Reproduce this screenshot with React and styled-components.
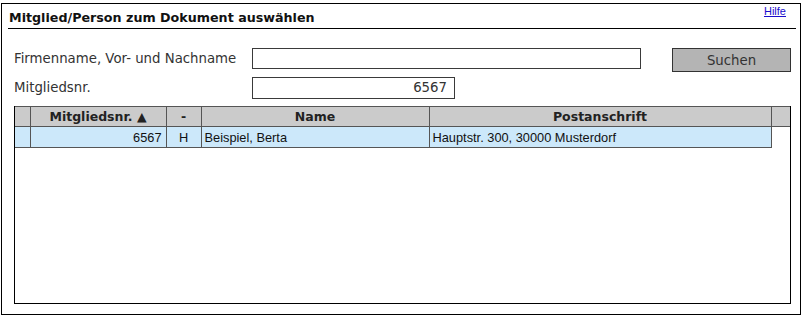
import React from "react";
import styled, { createGlobalStyle } from "styled-components";

const Global = createGlobalStyle`
  html, body { margin: 0; padding: 0; background: #fff; }
  body { font-family: "DejaVu Sans", Verdana, sans-serif; font-size: 12px; color: #222; }
`;

const Frame = styled.div`
  box-sizing: border-box;
  margin: 3px 0 0 1px;
  width: 800px;
  height: 312px;
  border: 1px solid #000;
  padding: 0 4px 0 6px;
  display: flex;
  flex-direction: column;
`;

const TitleBar = styled.div`
  display: flex;
  justify-content: space-between;
  align-items: flex-end;
  height: 24px;
  border-bottom: 1px solid #000;
  padding: 0 10px 0 1px;
`;

const Title = styled.h1`
  margin: 0 0 3px 0;
  font-size: 12.7px;
  font-weight: bold;
  color: #111;
`;

const HelpLink = styled.a`
  align-self: flex-start;
  margin-top: 1px;
  font-family: "Liberation Sans", Arial, sans-serif;
  font-size: 11px;
  color: #1a0dcc;
  text-decoration: underline;
`;

const Form = styled.div`
  display: grid;
  grid-template-columns: 238px 388px 32px 119px;
  grid-template-rows: 21px 21px;
  row-gap: 8px;
  align-items: center;
  margin: 19px 0 0 6px;
`;

const Label = styled.label`
  font-size: 13.3px;
  color: #333;
  line-height: 15px;
`;

const Input = styled.input`
  box-sizing: border-box;
  height: ${(p) => p.$height || 21}px;
  width: ${(p) => p.$width}px;
  border: 1px solid #3a3a3a;
  padding: 0 7px;
  font-family: "DejaVu Sans", Verdana, sans-serif;
  font-size: 13.3px;
  color: #333;
  text-align: ${(p) => (p.$right ? "right" : "left")};
  outline: none;
`;

const Button = styled.button`
  grid-column: 4;
  box-sizing: border-box;
  width: 119px;
  height: 24px;
  align-self: start;
  border: 1px solid #333;
  background: #b4b4b4;
  font-family: "DejaVu Sans", Verdana, sans-serif;
  font-size: 13.3px;
  color: #333;
  padding: 0;
`;

const Spacer = styled.div``;

const TableBox = styled.div`
  box-sizing: border-box;
  margin: 8px 0 0 6px;
  width: 777px;
  height: 198px;
  border-left: 1px solid #000;
  border-right: 1px solid #000;
  border-bottom: 1px solid #000;
  overflow: hidden;
`;

const Table = styled.table`
  border-collapse: collapse;
  table-layout: fixed;
  width: 775px;
`;

const Th = styled.th`
  height: 19px;
  padding: 0;
  background: #cbcbcb;
  border: 1px solid #555;
  font-size: 12.5px;
  font-weight: bold;
  color: #222;
  text-align: center;
  &:first-child { border-left: none; }
  &:last-child { border-right: none; }
`;

const Td = styled.td`
  height: 20px;
  padding: 0 ${(p) => (p.$align === "right" ? "4px" : "3px")};
  background: #cce8fa;
  border: 1px solid #555;
  border-top: none;
  font-family: "Liberation Sans", Arial, sans-serif;
  font-size: 12.8px;
  color: #111;
  text-align: ${(p) => p.$align || "left"};
  white-space: nowrap;
  &:first-child { border-left: none; }
`;

const EmptyTd = styled.td`
  padding: 0;
  border: none;
  border-left: 1px solid #555;
  background: #fff;
`;

export default function App() {
  return (
    <>
      <Global />
      <Frame>
        <TitleBar>
          <Title>Mitglied/Person zum Dokument auswählen</Title>
          <HelpLink href="#">Hilfe</HelpLink>
        </TitleBar>
        <Form>
          <Label>Firmenname, Vor- und Nachname</Label>
          <Input $width={389} defaultValue="" />
          <Spacer />
          <Button>Suchen</Button>
          <Label>Mitgliedsnr.</Label>
          <Input $width={203} $height={22} $right defaultValue="6567" />
        </Form>
        <TableBox>
          <Table>
            <colgroup>
              <col style={{ width: 15 }} />
              <col style={{ width: 136 }} />
              <col style={{ width: 35 }} />
              <col style={{ width: 228 }} />
              <col style={{ width: 342 }} />
              <col style={{ width: 19 }} />
            </colgroup>
            <thead>
              <tr>
                <Th />
                <Th>Mitgliedsnr. ▲</Th>
                <Th>-</Th>
                <Th>Name</Th>
                <Th>Postanschrift</Th>
                <Th />
              </tr>
            </thead>
            <tbody>
              <tr>
                <Td />
                <Td $align="right">6567</Td>
                <Td $align="center">H</Td>
                <Td>Beispiel, Berta</Td>
                <Td>Hauptstr. 300, 30000 Musterdorf</Td>
                <EmptyTd />
              </tr>
            </tbody>
          </Table>
        </TableBox>
      </Frame>
    </>
  );
}
